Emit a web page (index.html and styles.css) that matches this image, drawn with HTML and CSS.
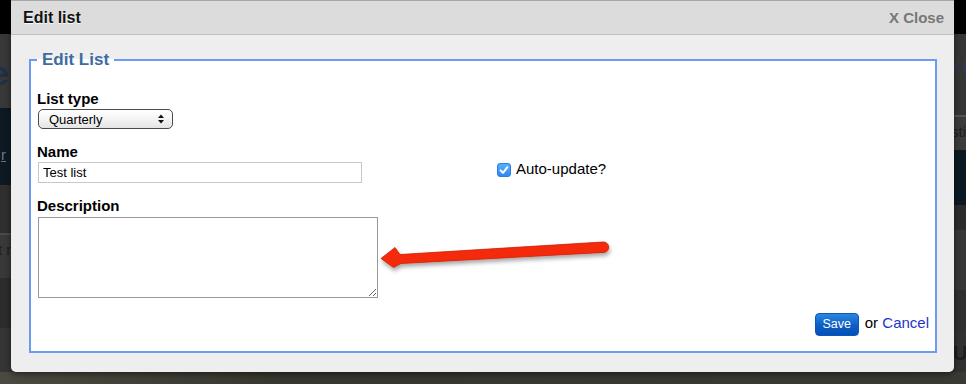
FILE: index.html
```html
<!DOCTYPE html>
<html lang="en">
<head>
    <meta charset="UTF-8">
    <title>Edit list</title>
    <link rel="stylesheet" href="styles.css">
</head>
<body>
<div class="backdrop">
    <div class="bg-top"></div>
    <div class="bg-mid">
        <div class="bg-side bg-left">
            <div class="band b1"><span class="big-e">e</span></div>
            <div class="band b2"><span class="under">r</span></div>
            <div class="band b3"></div>
            <div class="band b4"><span class="dim">t r</span></div>
            <div class="band b5"></div>
            <div class="band b6"></div>
        </div>
        <div class="bg-side bg-right">
            <div class="band r1"><span class="link-y">y p</span></div>
            <div class="band r2"><span class="dim">sti</span></div>
            <div class="band r3"></div>
            <div class="band r4"></div>
            <div class="band r5"></div>
            <div class="band r6"></div>
            <div class="band r7"><span class="dim big-u">U</span></div>
        </div>
    </div>
    <div class="bg-bottom"></div>
</div>

<div class="dialog">
    <div class="dialog-head">
        <span class="dialog-title">Edit list</span>
        <a class="dialog-close" href="#">X Close</a>
    </div>
    <div class="dialog-body">
        <fieldset class="edit-box">
            <legend>Edit List</legend>

            <div class="field">
                <label class="lbl">List type</label>
                <span class="select-wrap">
                    <select class="select">
                        <option>Quarterly</option>
                        <option>Monthly</option>
                        <option>Weekly</option>
                    </select>
                    <svg class="select-arrows" width="8" height="10" viewBox="0 0 8 10">
                        <path d="M4 0.5 L7 4 L1 4 Z" fill="#111"/>
                        <path d="M4 9.5 L7 6 L1 6 Z" fill="#111"/>
                    </svg>
                </span>
            </div>

            <div class="row">
                <div class="field field-name">
                    <label class="lbl">Name</label>
                    <input class="text-input" type="text" value="Test list">
                </div>
                <label class="auto">
                    <span class="tick">
                        <svg width="14" height="14" viewBox="0 0 14 14">
                            <path d="M3.6 7.4 L6 9.9 L10.4 4.2" fill="none" stroke="#fff" stroke-width="2" stroke-linecap="round" stroke-linejoin="round"/>
                        </svg>
                    </span>
                    Auto-update?
                </label>
            </div>

            <div class="field field-desc">
                <label class="lbl">Description</label>
                <textarea class="textarea"></textarea>
            </div>

            <div class="actions">
                <button class="btn-save" type="button">Save</button>
                <span class="or">or <a class="cancel" href="#">Cancel</a></span>
            </div>
        </fieldset>
    </div>
</div>

<svg class="arrow" width="250" height="50" viewBox="370 230 250 50">
    <defs>
        <filter id="shadow" x="-10%" y="-50%" width="120%" height="200%">
            <feDropShadow dx="1" dy="3" stdDeviation="2" flood-color="#000" flood-opacity="0.35"/>
        </filter>
    </defs>
    <path d="M381 258.5 L395 247.5 L400 254.5 L603 242 A5.2 5.2 0 0 1 604 252.4 L401 263.5 L393.5 267.5 Z"
          fill="#f42c0c" stroke="#cf1d00" stroke-width="0.8" stroke-linejoin="round" filter="url(#shadow)"/>
</svg>
</body>
</html>
```

FILE: styles.css
```css
*{
    box-sizing: border-box;
}
html, body{
    margin: 0;
    padding: 0;
}
body{
    width: 966px;
    height: 384px;
    overflow: hidden;
    position: relative;
    background: #333;
    font-family: "Liberation Sans", Arial, sans-serif;
}

/* dimmed page behind the dialog */
.backdrop{
    display: flex;
    flex-direction: column;
    height: 384px;
}
.bg-top{
    height: 34px;
    background: #000;
}
.bg-mid{
    height: 338px;
    display: flex;
    justify-content: space-between;
}
.bg-side{
    display: flex;
    flex-direction: column;
    overflow: hidden;
}
.bg-left{
    width: 11px;
}
.bg-right{
    width: 13px;
}
.band{
    white-space: nowrap;
    overflow: hidden;
}
.b1{ height: 74px; background: #383838; }
.b2{ height: 77px; background: #0d1a24; }
.b3{ height: 50px; background: #2f2f2f; border-bottom: 2px solid #4a4a4a; }
.b4{ height: 43px; background: #393939; }
.b5{ height: 50px; background: #2c2c2c; }
.b6{ flex: 1; background: #353535; }

.r1{ height: 83px; background: #363636; border-bottom: 2px solid #555; }
.r2{ height: 33px; background: #3c3c3c; }
.r3{ height: 55px; background: #0c1922; }
.r4{ height: 25px; background: #2c2c2c; }
.r5{ height: 60px; background: #373737; }
.r6{ height: 40px; background: #2f2f2f; }
.r7{ flex: 1; background: #313131; }

.bg-bottom{
    flex: 1;
    background: linear-gradient(90deg, #4a4a41, #37372f 30%, #3a3a33);
}
.big-e{
    display: block;
    margin: 20px 0 0 -10px;
    font-size: 34px;
    font-weight: bold;
    color: #1c3148;
}
.under{
    display: block;
    margin: 38px 0 0 1px;
    font-size: 15px;
    color: #6a7580;
    text-decoration: underline;
}
.dim{
    display: block;
    margin: 6px 0 0 -2px;
    font-size: 15px;
    color: #1e1e1e;
}
.link-y{
    display: block;
    margin: 22px 0 0 -3px;
    font-size: 17px;
    color: #2a3c66;
}
.big-u{
    margin: 12px 0 0 0;
    font-size: 20px;
    font-weight: bold;
}

/* dialog */
.dialog{
    position: absolute;
    top: 0;
    left: 11px;
    width: 943px;
    height: 372px;
    display: flex;
    flex-direction: column;
    background: #eee;
    border-top: 1px solid #a6a6a6;
    border-radius: 0 0 5px 5px;
    box-shadow: 0 2px 6px rgba(0,0,0,.5);
}
.dialog-head{
    height: 34px;
    display: flex;
    align-items: center;
    justify-content: space-between;
    padding: 0 10px 0 12px;
    background: #dcdcdc;
    border-bottom: 1px solid #bfbfbf;
}
.dialog-title{
    font-size: 16px;
    font-weight: bold;
    color: #111;
    text-shadow: 0 1px 1px #fff;
}
.dialog-close{
    font-size: 15px;
    font-weight: bold;
    color: #777;
    text-decoration: none;
}
.dialog-body{
    flex: 1;
    display: flex;
    flex-direction: column;
    padding: 15px 17px 19px 18px;
}

.edit-box{
    flex: 1;
    margin: 0;
    min-width: 0;
    padding: 20px 6px 0 6px;
    border: 2px solid #6c9cf0;
    background: #fff;
}
.edit-box legend{
    padding: 0 5px;
    font-size: 17px;
    line-height: 20px;
    font-weight: bold;
    color: #3d6ca0;
}

.lbl{
    display: block;
    font-size: 15px;
    line-height: 18px;
    font-weight: bold;
    color: #000;
}
.select-wrap{
    position: relative;
    display: inline-block;
    margin: 1px 0 0 1px;
    vertical-align: top;
}
.select{
    -webkit-appearance: none;
    appearance: none;
    display: block;
    width: 135px;
    height: 20px;
    margin: 0;
    padding: 0 0 0 10px;
    border: 1px solid #4b4b4b;
    border-radius: 5px;
    background: linear-gradient(#fff, #f4f4f4 50%, #e4e4e4);
    font-family: "Liberation Sans", Arial, sans-serif;
    font-size: 13px;
    color: #000;
    outline: none;
}
.select-arrows{
    position: absolute;
    top: 5px;
    left: 119px;
    pointer-events: none;
}

.row{
    display: flex;
    align-items: flex-start;
    margin-top: 14px;
}
.field-name{
    width: 460px;
}
.text-input{
    display: block;
    width: 324px;
    height: 21px;
    margin: 1px 0 0 1px;
    padding: 0 4px;
    border: 1px solid #c8c8c8;
    font-family: "Liberation Sans", Arial, sans-serif;
    font-size: 13px;
    color: #000;
    outline: none;
}
.auto{
    display: flex;
    align-items: flex-start;
    margin-top: 17px;
    font-size: 15px;
    line-height: 18px;
    color: #000;
}
.tick{
    width: 14px;
    height: 14px;
    margin: 3px 5px 0 0;
    border-radius: 3px;
    background: linear-gradient(#5aaefd, #2f88f3);
    border: 1px solid #2c7de0;
    display: flex;
    align-items: center;
    justify-content: center;
}
.tick svg{
    display: block;
    margin: -1px;
}

.field-desc{
    margin-top: 14px;
}
.field-desc .lbl{
    margin-bottom: 2px;
}
.textarea{
    display: block;
    width: 340px;
    height: 81px;
    margin: 0 0 0 1px;
    border: 1px solid #999;
    font-family: "Liberation Sans", Arial, sans-serif;
    font-size: 13px;
    outline: none;
}

.actions{
    display: flex;
    align-items: baseline;
    justify-content: flex-end;
    margin-top: 15px;
}
.btn-save{
    width: 44px;
    height: 23px;
    margin: 0 6px 0 0;
    padding: 0;
    border: 1px solid #0b58b8;
    border-radius: 4px;
    background: linear-gradient(#2a86e0, #0d5ec4 55%, #0650b5);
    font-family: "Liberation Sans", Arial, sans-serif;
    font-size: 12.5px;
    line-height: 21px;
    color: #fff;
}
.or{
    font-size: 15px;
    line-height: 18px;
    color: #000;
}
.cancel{
    color: #2434c8;
    text-decoration: none;
}

.arrow{
    position: absolute;
    left: 370px;
    top: 230px;
}
```
